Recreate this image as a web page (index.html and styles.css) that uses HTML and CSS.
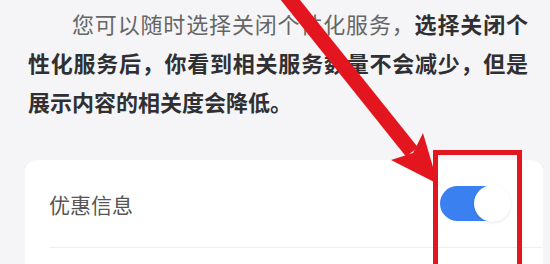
FILE: index.html
```html
<!doctype html>
<html>
<head>
	<meta charset="utf-8">
	<meta name="viewport" content="width=device-width, initial-scale=1.0">
	<title>个性化服务</title>
	<link rel="stylesheet" href="styles.css">
</head>
<body>
	<div id="page">
		<p class="intro">
			<span class="line first"><span class="muted">您可以随时选择关闭个性化服务，</span>选择关闭个</span>
			<span class="line">性化服务后，你看到相关服务数量不会减少，但是</span>
			<span class="line last">展示内容的相关度会降低。</span>
		</p>
		<div class="card">
			<div class="row">
				<span class="label">优惠信息</span>
				<span class="switch on"><span class="knob"></span></span>
			</div>
		</div>
	</div>

	<div class="mark-box"></div>
	<svg class="mark-arrow" viewBox="0 0 550 264" width="550" height="264">
		<line x1="284" y1="-8" x2="412" y2="152" stroke="#e3161f" stroke-width="15" />
		<polygon points="438,184 423,133 413,153 391,160" fill="#e3161f" />
	</svg>
</body>
</html>
```

FILE: styles.css
```css
html, body {
	margin: 0;
	height: 100%;
}
body {
	background: #f5f5f7;
	font-family: "Noto Sans CJK SC", "Noto Sans", sans-serif;
	overflow: hidden;
}
#page {
	position: relative;
	height: 100%;
	padding-top: 4px;
	box-sizing: border-box;
	overflow: hidden;
}

.intro {
	margin: 0 22px 0 28px;
	font-size: 22px;
	line-height: 39px;
	font-weight: 700;
	color: #303032;
}
.line {
	display: block;
	text-align: justify;
	text-align-last: justify;
}
.line.first {
	text-indent: 44px;
}
.line.last {
	text-align-last: auto;
}
.muted {
	font-weight: 400;
	color: #666;
}

.card {
	margin: 39px 7px 0 25px;
	height: 104px;
	background: #fff;
	border-radius: 12px 12px 0 0;
}
.row {
	display: flex;
	align-items: center;
	justify-content: space-between;
	height: 87px;
	margin-left: 24px;
	padding-right: 33px;
	border-bottom: 1px solid #eeeeee;
}
.label {
	font-size: 21px;
	color: #555;
}
.switch {
	position: relative;
	display: block;
	width: 70px;
	height: 35px;
	border-radius: 18px;
	background: #3b80f1;
}
.switch .knob {
	position: absolute;
	top: -1px;
	right: -1px;
	width: 37px;
	height: 37px;
	border-radius: 50%;
	background: #fff;
	box-shadow: 0 1px 3px rgba(0, 0, 0, 0.1);
}

.mark-box {
	position: absolute;
	left: 433px;
	top: 150px;
	width: 79px;
	height: 109px;
	border: 5px solid #e3161f;
	border-bottom: none;
}
.mark-arrow {
	position: absolute;
	left: 0;
	top: 0;
}
```
